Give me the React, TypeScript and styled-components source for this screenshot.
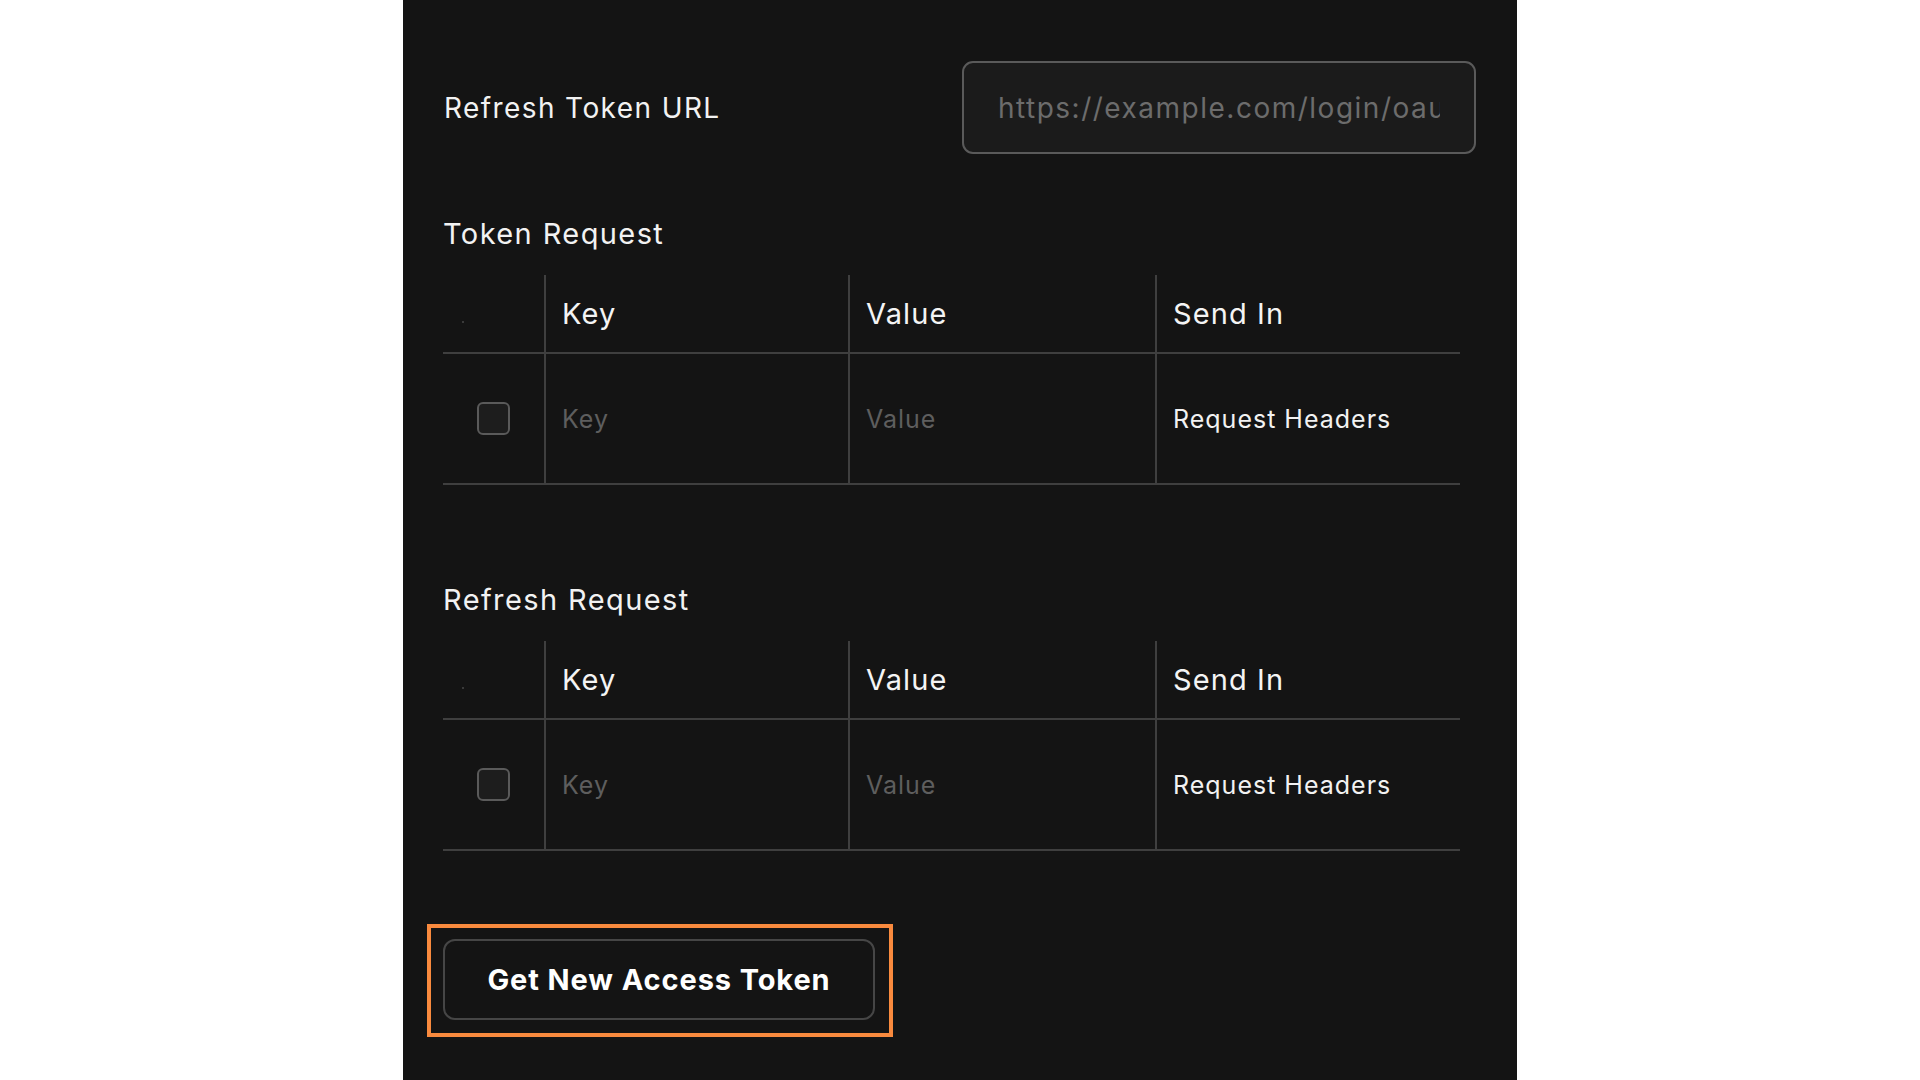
import React from "react";
import styled, { createGlobalStyle } from "styled-components";

const GlobalStyle = createGlobalStyle`
  html, body {
    margin: 0;
    padding: 0;
    background: #ffffff;
  }
  * { box-sizing: border-box; }
`;

const Page = styled.div`
  display: flex;
  justify-content: center;
  min-height: 100vh;
  font-family: Inter, "Liberation Sans", sans-serif;
  color: #f2f2f2;
`;

const Panel = styled.div`
  width: 1114px;
  min-height: 1080px;
  background: #141414;
  padding: 61px 41px 0 40px;
  display: flex;
  flex-direction: column;
`;

const UrlRow = styled.div`
  display: flex;
  align-items: center;
  justify-content: space-between;
`;

const Label = styled.span`
  font-size: 28px;
  letter-spacing: 1.4px;
  font-weight: 400;
  padding-left: 1px;
`;

const UrlInput = styled.input`
  width: 514px;
  height: 93px;
  border: 2px solid #5a5a5a;
  border-radius: 11px;
  background: #1b1b1b;
  padding: 0 34px 0 34px;
  font-family: Inter, "Liberation Sans", sans-serif;
  font-size: 28px;
  letter-spacing: 1.5px;
  color: #f2f2f2;
  outline: none;
  &::placeholder {
    color: #6c6c6c;
  }
`;

const SectionTitle = styled.div<{ $gap: number }>`
  margin-top: ${(p) => p.$gap}px;
  font-size: 29px;
  letter-spacing: 1.4px;
  line-height: 36px;
  height: 36px;
`;

const Table = styled.div`
  margin-top: 23px;
  width: 1017px;
  display: grid;
  grid-template-columns: 101px 304px 307px 1fr;
`;

const HeadCell = styled.div<{ $divider?: boolean }>`
  height: 79px;
  display: flex;
  align-items: center;
  padding-left: 16px;
  border-bottom: 2px solid #3f3f3f;
  border-left: ${(p) => (p.$divider ? "2px solid #3f3f3f" : "none")};
  font-size: 29px;
  letter-spacing: 1.1px;
  color: #f4f4f4;
`;

const BodyCell = styled.div<{ $divider?: boolean; $placeholder?: boolean; $center?: boolean }>`
  height: 131px;
  display: flex;
  align-items: center;
  justify-content: ${(p) => (p.$center ? "center" : "flex-start")};
  padding-left: ${(p) => (p.$center ? "0" : "16px")};
  border-bottom: 2px solid #3f3f3f;
  border-left: ${(p) => (p.$divider ? "2px solid #3f3f3f" : "none")};
  font-size: 25px;
  letter-spacing: 1px;
  color: ${(p) => (p.$placeholder ? "#5e5e5e" : "#f2f2f2")};
`;

const Dot = styled.span`
  width: 2px;
  height: 2px;
  margin-top: 17px;
  margin-left: 3px;
  background: #3a3a3a;
`;

const Checkbox = styled.span`
  width: 33px;
  height: 33px;
  border: 2px solid #5a5a5a;
  border-radius: 6px;
  background: #1d1d1d;
`;

const ButtonArea = styled.div`
  margin-top: 88px;
  position: relative;
  align-self: flex-start;
`;

const Highlight = styled.div`
  position: absolute;
  left: -16px;
  top: -15px;
  right: -18px;
  bottom: -17px;
  border: 4px solid #f98a3e;
  pointer-events: none;
`;

const TokenButton = styled.button`
  width: 432px;
  height: 81px;
  border: 2px solid #464646;
  border-radius: 12px;
  background: #141414;
  color: #ffffff;
  font-family: Inter, "Liberation Sans", sans-serif;
  font-weight: 700;
  font-size: 29px;
  letter-spacing: 0.9px;
  cursor: pointer;
`;

type Row = { key: string; value: string; sendIn: string };

const ParamTable: React.FC<{ rows: Row[] }> = ({ rows }) => (
  <Table>
    <HeadCell>
      <Dot />
    </HeadCell>
    <HeadCell $divider>Key</HeadCell>
    <HeadCell $divider>Value</HeadCell>
    <HeadCell $divider>Send In</HeadCell>
    {rows.map((r, i) => (
      <React.Fragment key={i}>
        <BodyCell $center>
          <Checkbox />
        </BodyCell>
        <BodyCell $divider $placeholder={!r.key}>
          {r.key || "Key"}
        </BodyCell>
        <BodyCell $divider $placeholder={!r.value}>
          {r.value || "Value"}
        </BodyCell>
        <BodyCell $divider>{r.sendIn}</BodyCell>
      </React.Fragment>
    ))}
  </Table>
);

const emptyRow: Row[] = [{ key: "", value: "", sendIn: "Request Headers" }];

export default function App() {
  return (
    <>
      <GlobalStyle />
      <Page>
        <Panel>
          <UrlRow>
            <Label>Refresh Token URL</Label>
            <UrlInput placeholder="https://example.com/login/oauth/refresh" />
          </UrlRow>
          <SectionTitle $gap={62}>Token Request</SectionTitle>
          <ParamTable rows={emptyRow} />
          <SectionTitle $gap={97}>Refresh Request</SectionTitle>
          <ParamTable rows={emptyRow} />
          <ButtonArea>
            <TokenButton>Get New Access Token</TokenButton>
            <Highlight />
          </ButtonArea>
        </Panel>
      </Page>
    </>
  );
}
